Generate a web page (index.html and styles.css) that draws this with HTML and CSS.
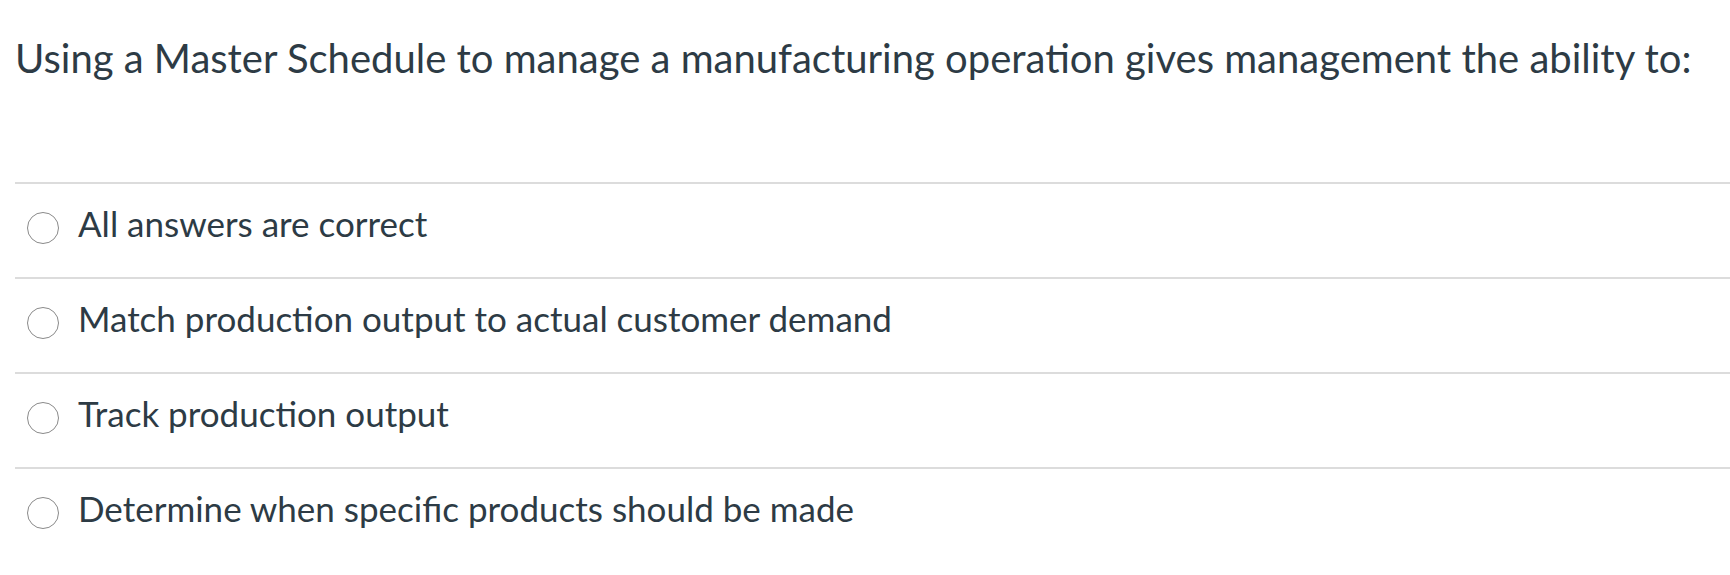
FILE: index.html
```html
<!DOCTYPE html>
<html>
<head>
<meta charset="utf-8">
<link rel="stylesheet" href="styles.css">
</head>
<body>
<div class="question">
  <div class="question-text">Using a Master Schedule to manage a manufacturing operation gives management the ability to:</div>
  <div class="answers">
    <label class="answer"><span class="radio"></span><span class="answer-text">All answers are correct</span></label>
    <label class="answer"><span class="radio"></span><span class="answer-text">Match production output to actual customer demand</span></label>
    <label class="answer"><span class="radio"></span><span class="answer-text">Track production output</span></label>
    <label class="answer"><span class="radio"></span><span class="answer-text">Determine when specific products should be made</span></label>
  </div>
</div>
</body>
</html>
```
FILE: styles.css
```css
html, body {
  margin: 0;
  padding: 0;
  background: #ffffff;
}
body {
  font-family: Lato, "Open Sans", sans-serif;
  color: #2d3b45;
  overflow: hidden;
}
.question {
  padding-left: 15px;
}
.question-text {
  font-size: 40px;
  line-height: 48px;
  padding-top: 34px;
  height: 48px;
  margin-bottom: 100px;
  white-space: nowrap;
}
.answers {
  display: flex;
  flex-direction: column;
}
.answer {
  display: flex;
  align-items: flex-start;
  box-sizing: border-box;
  height: 95px;
  border-top: 2px solid #dcdcdc;
  padding-left: 12px;
  padding-top: 18px;
}
.radio {
  width: 32px;
  height: 32px;
  box-sizing: border-box;
  border: 1px solid #8a8a8a;
  border-radius: 50%;
  flex: none;
  margin-top: 10px;
}
.answer-text {
  font-size: 35px;
  line-height: 42px;
  margin-left: 19px;
  white-space: nowrap;
}
```
